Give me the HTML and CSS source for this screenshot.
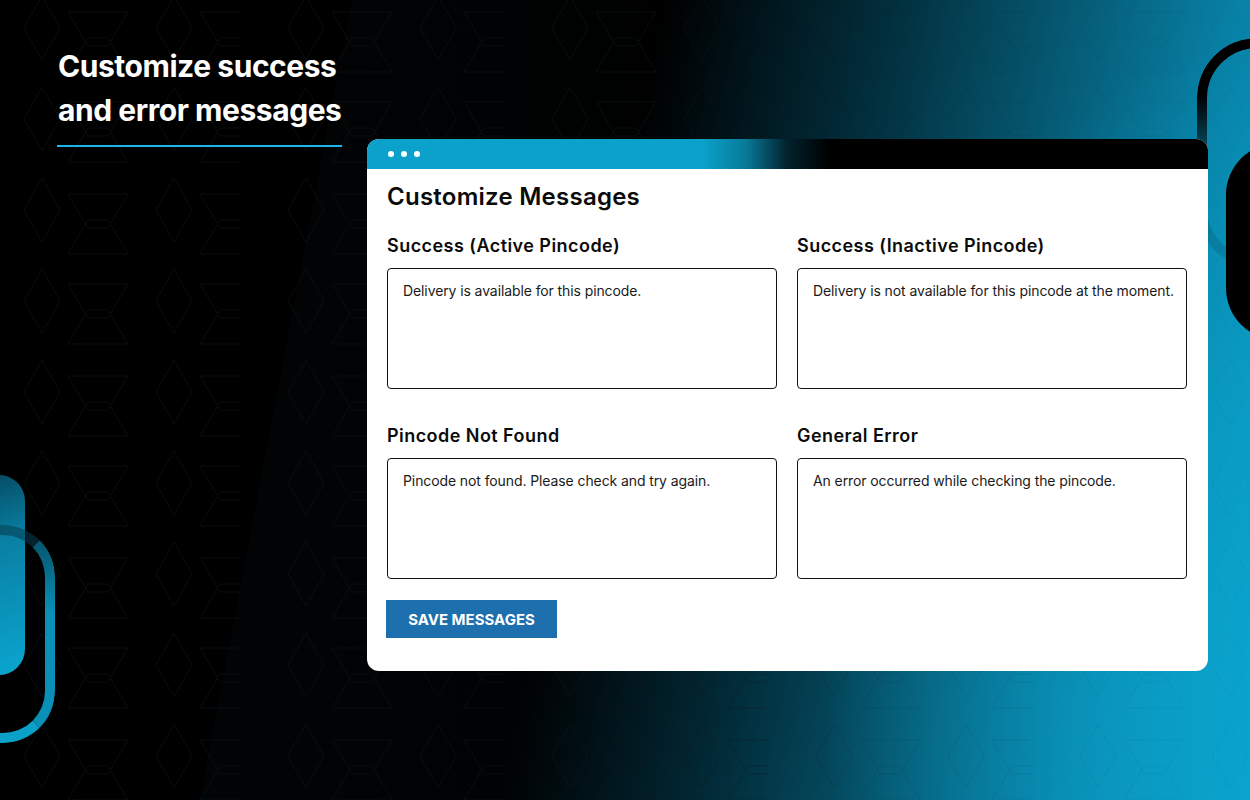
FILE: index.html
```html
<!DOCTYPE html>
<html lang="en">
<head>
<meta charset="utf-8">
<title>Customize Messages</title>
<link rel="stylesheet" href="styles.css">
</head>
<body>
<div class="stage">
  <div class="bg-slant"></div>
  <svg class="bg-pattern" width="1250" height="800" aria-hidden="true">
    <defs>
      <pattern id="pat" x="-24" y="-12" width="264" height="182" patternUnits="userSpaceOnUse">
        <g fill="none" stroke="#121619" stroke-width="1">
          <path d="M66 8 L84 40 L66 72 L48 40 Z"/>
          <path d="M66 99 L84 131 L66 163 L48 131 Z"/>
          <path d="M92 24 L152 24 L132 58 L112 58 Z"/>
          <path d="M92 84 L112 50 L132 50 L152 84 Z"/>
          <path d="M92 114 L152 114 L132 148 L112 148 Z"/>
          <path d="M92 174 L112 140 L132 140 L152 174 Z"/>
          <path d="M198 8 L216 40 L198 72 L180 40 Z"/>
          <path d="M198 99 L216 131 L198 163 L180 131 Z"/>
          <path d="M224 24 L284 24 L264 58 L244 58 Z"/>
          <path d="M224 84 L244 50 L264 50 L284 84 Z"/>
          <path d="M224 114 L284 114 L264 148 L244 148 Z"/>
          <path d="M224 174 L244 140 L264 140 L284 174 Z"/>
        </g>
      </pattern>
    </defs>
    <rect width="1250" height="800" fill="url(#pat)"/>
  </svg>
  <div class="deco deco-tr-ring"></div>
  <div class="deco deco-tr-block"></div>
  <div class="deco deco-bl-block"></div>
  <div class="deco deco-bl-ring"></div>

  <main class="layout">
    <section class="intro">
      <h1 class="intro-title">Customize success<br>and error messages</h1>
      <div class="intro-rule"></div>
    </section>

    <section class="window">
      <div class="window-bar">
        <span class="dot"></span><span class="dot"></span><span class="dot"></span>
      </div>
      <div class="window-body">
        <h2 class="panel-title">Customize Messages</h2>
        <div class="fields">
          <div class="field">
            <label class="field-label" for="m1">Success (Active Pincode)</label>
            <textarea class="field-input" id="m1">Delivery is available for this pincode.</textarea>
          </div>
          <div class="field">
            <label class="field-label" for="m2">Success (Inactive Pincode)</label>
            <textarea class="field-input" id="m2">Delivery is not available for this pincode at the moment.</textarea>
          </div>
          <div class="field">
            <label class="field-label" for="m3">Pincode Not Found</label>
            <textarea class="field-input" id="m3">Pincode not found. Please check and try again.</textarea>
          </div>
          <div class="field">
            <label class="field-label" for="m4">General Error</label>
            <textarea class="field-input" id="m4">An error occurred while checking the pincode.</textarea>
          </div>
        </div>
        <button class="save-btn" type="button">SAVE MESSAGES</button>
      </div>
    </section>
  </main>
</div>
</body>
</html>
```

FILE: styles.css
```css
* { box-sizing: border-box; }

html, body {
  margin: 0;
  padding: 0;
  width: 1250px;
  height: 800px;
  overflow: hidden;
}

body {
  font-family: "Inter", "Liberation Sans", sans-serif;
  color: #111;
}

.stage {
  position: relative;
  width: 1250px;
  height: 800px;
  overflow: hidden;
  background:
    radial-gradient(ellipse 480px 620px at 1300px 660px, rgba(10,164,205,0.9) 0%, rgba(10,164,205,0.5) 45%, rgba(10,164,205,0) 100%),
    linear-gradient(102deg, #000 0%, #000 47%, #011820 55%, #022f3d 63%, #05546c 74%, #0880a5 87%, #0aa2cb 100%);
}

.bg-slant {
  position: absolute;
  inset: 0;
  background: linear-gradient(90deg, rgba(3,10,15,0.9), rgba(3,10,15,0) 60%);
  clip-path: polygon(352px 0, 1250px 0, 1250px 800px, 200px 800px);
  opacity: 0.6;
}

.bg-pattern {
  position: absolute;
  left: 0;
  top: 0;
  opacity: 0.55;
  -webkit-mask: linear-gradient(90deg, #000 0%, #000 50%, rgba(0,0,0,0.2) 70%, rgba(0,0,0,0.08) 100%);
          mask: linear-gradient(90deg, #000 0%, #000 50%, rgba(0,0,0,0.2) 70%, rgba(0,0,0,0.08) 100%);
}

.deco { position: absolute; }

.deco-tr-ring {
  left: 1197px;
  top: 38px;
  width: 140px;
  height: 230px;
  border: 10px solid #000;
  border-radius: 60px;
  -webkit-mask: linear-gradient(180deg, #000 0%, #000 25%, rgba(0,0,0,0.15) 60%, rgba(0,0,0,0.1) 100%);
          mask: linear-gradient(180deg, #000 0%, #000 25%, rgba(0,0,0,0.15) 60%, rgba(0,0,0,0.1) 100%);
}

.deco-tr-block {
  left: 1226px;
  top: 143px;
  width: 120px;
  height: 197px;
  background: #000;
  border-radius: 52px 0 0 52px;
}

.deco-bl-block {
  left: -80px;
  top: 475px;
  width: 105px;
  height: 200px;
  border-radius: 0 26px 26px 0;
  background: linear-gradient(160deg, #03384a 0%, #0a7fa3 40%, #0aa6d0 100%);
}

.deco-bl-ring {
  left: -100px;
  top: 525px;
  width: 155px;
  height: 218px;
  border: 10px solid #0a9ac2;
  border-radius: 0 52px 52px 0;
  border-left: none;
  border-color: #043b4d #0a8fb6 #0aa0c8 transparent;
  -webkit-mask: linear-gradient(180deg, rgba(0,0,0,0.5) 0%, #000 40%);
          mask: linear-gradient(180deg, rgba(0,0,0,0.5) 0%, #000 40%);
}

.layout {
  position: relative;
  display: grid;
  grid-template-columns: 285px 841px;
  column-gap: 25px;
  padding-left: 57px;
  align-items: start;
}

.intro {
  padding-top: 44px;
}

.intro-title {
  margin: 0;
  color: #fff;
  font-family: "Inter", "Liberation Sans", sans-serif;
  font-weight: 700;
  font-size: 30px;
  line-height: 44px;
  letter-spacing: -0.45px;
  padding-left: 1px;
  white-space: nowrap;
}

.intro-rule {
  margin-top: 13px;
  height: 2px;
  background: #19b6ea;
}

.window {
  margin-top: 139px;
  background: #fff;
  border-radius: 12px;
  overflow: hidden;
}

.window-bar {
  height: 30px;
  display: flex;
  align-items: center;
  gap: 7px;
  padding-left: 21px;
  background: linear-gradient(90deg, #0ba1ca 0%, #0ba1ca 40%, #087a9a 45%, #02222c 50%, #000 55%, #000 100%);
}

.dot {
  width: 6px;
  height: 6px;
  border-radius: 50%;
  background: #fff;
}

.window-body {
  padding: 13px 20px 33px 20px;
}

.panel-title {
  margin: 0;
  font-size: 24px;
  font-weight: 600;
  line-height: 30px;
  color: #0b0b0b;
  letter-spacing: 0.25px;
}

.fields {
  margin-top: 22px;
  display: grid;
  grid-template-columns: 390px 390px;
  column-gap: 20px;
  row-gap: 35px;
}

.field {
  display: flex;
  flex-direction: column;
}

.field-label {
  font-size: 18px;
  font-weight: 600;
  line-height: 24px;
  color: #0b0b0b;
  margin-bottom: 10px;
  letter-spacing: 0.45px;
}

.field-input {
  display: block;
  width: 390px;
  height: 121px;
  margin: 0;
  border: 1px solid #111;
  border-radius: 4px;
  padding: 13px 4px 13px 15px;
  resize: none;
  font-family: "Inter", "Liberation Sans", sans-serif;
  font-size: 14px;
  line-height: 18px;
  color: #1a1a1a;
  background: #fff;
  letter-spacing: -0.1px;
  overflow: hidden;
}

.save-btn {
  margin-top: 21px;
  margin-left: -1px;
  width: 171px;
  height: 38px;
  border: none;
  background: #1e6fad;
  color: #fff;
  font-family: "Inter", "Liberation Sans", sans-serif;
  font-weight: 700;
  font-size: 15px;
  letter-spacing: 0;
  padding: 0;
  cursor: pointer;
}
```
